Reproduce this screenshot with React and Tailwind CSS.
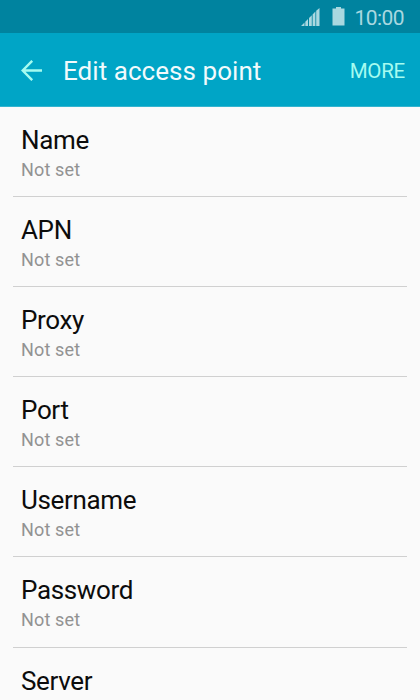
const fields = [
  { name: "Name", value: "Not set" },
  { name: "APN", value: "Not set" },
  { name: "Proxy", value: "Not set" },
  { name: "Port", value: "Not set" },
  { name: "Username", value: "Not set" },
  { name: "Password", value: "Not set" },
  { name: "Server" },
];

function StatusBar() {
  return (
    <div className="flex h-[33px] shrink-0 items-center justify-end bg-[#00839f] pt-[2px] pr-[16px] text-[#a9d8e0]">
      <svg className="-mt-[2px] mr-[12px]" width="19" height="18" viewBox="0 0 19 18" fill="currentColor">
        <path d="M0 18 3.500 14.500V18zM4.300 13.700 7 11v7H4.300zM8 10l2.800-2.800V18H8zM11.600 6.400l2.800-2.900V18h-2.800zM15.200 2.700 18.500 0v18h-3.300z" />
      </svg>
      <svg className="-mt-[3px] mr-[9px]" width="13" height="19" viewBox="0 0 13 19" fill="currentColor">
        <path d="M4 0h5v1.500h3.500V18.500H.5V1.500H4z" />
      </svg>
      <span className="mt-[2px] text-[21px] leading-[31px] tracking-[-0.55px]">10:00</span>
    </div>
  );
}

export default function App() {
  return (
    <div className="flex h-[700px] w-[420px] flex-col overflow-hidden bg-[#fafafa] font-[Roboto,sans-serif]">
      <StatusBar />
      <header className="flex h-[74px] shrink-0 items-center border-b border-[#33b4cf] bg-[#00a5c6] pr-[15px] pl-[21px]">
        <svg className="mt-px" width="21" height="21" viewBox="0 0 21 21" fill="none" stroke="#a5fbf0" strokeWidth="2.400">
          <path d="M11.200.8 1.700 10.500l9.500 9.700M1.700 10.500H21" />
        </svg>
        <h1 className="mt-[2px] ml-[21px] text-[26px] leading-[30px] tracking-[0.05px] text-[#f1fafc]">Edit access point</h1>
        <button className="mt-[2px] ml-auto text-[20.500px] leading-[24px] tracking-[-0.25px] text-[#a5fbf0]">MORE</button>
      </header>
      <main className="px-[13px]">
        {fields.map(({ name, value }) => (
          <div key={name} className="h-[90.1px] border-b border-[#d0d0d0] px-[8px] pt-[18px]">
            <div className="text-[26px] leading-[30px] tracking-[-0.35px] text-[#0c0c0c]">{name}</div>
            {value && (
              <div className="mt-[4px] text-[18px] leading-[22px] tracking-[0.15px] text-[#929292]">{value}</div>
            )}
          </div>
        ))}
      </main>
    </div>
  );
}
